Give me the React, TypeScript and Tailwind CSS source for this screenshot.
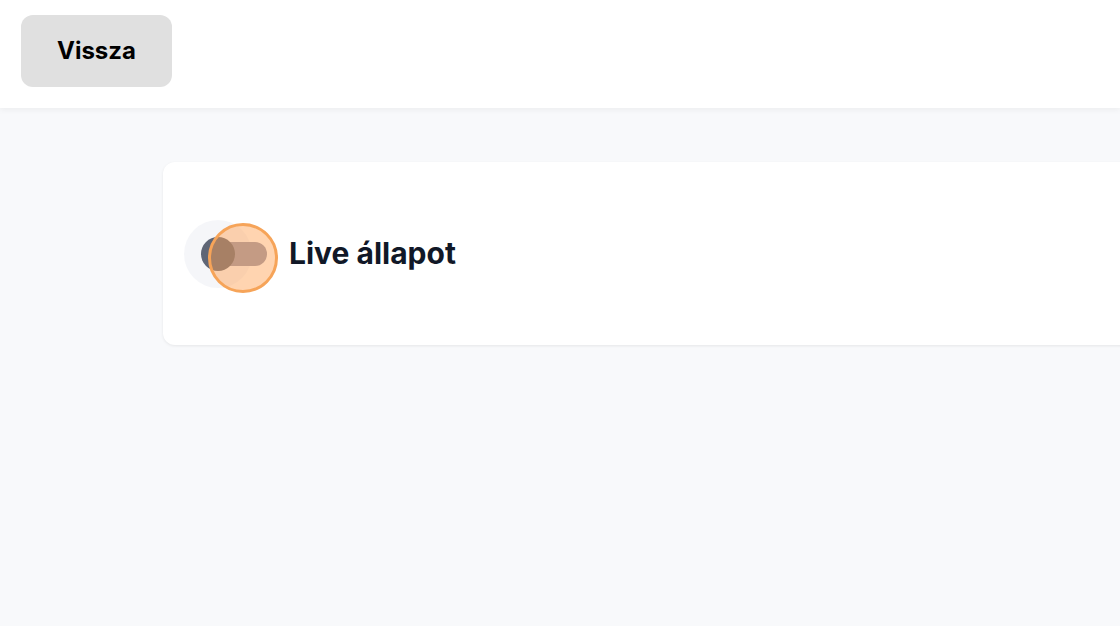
import React from "react";

// Interruptor "Live" com o halo de hover e o indicador de clique por cima
function LiveSwitch() {
  return (
    <div className="relative w-[96px] h-[68px] shrink-0 flex items-center">
      <div className="w-[68px] h-[68px] rounded-full bg-[#f3f4f7]/80 flex items-center justify-center">
        <div className="relative z-10 w-[34px] h-[34px] rounded-full bg-[#5f6676]" />
      </div>
      {/* trilho: acima do halo, abaixo do polegar */}
      <div className="absolute left-[18px] top-[22px] w-[65px] h-[24px] rounded-full bg-[#9496ae]" />
      {/* indicador de clique */}
      <div className="absolute z-20 left-[24px] top-[3px] w-[70px] h-[70px] rounded-full border-[3px] border-[#f6a459] bg-[#ffa050]/45" />
    </div>
  );
}

export default function App() {
  return (
    <div
      className="w-full h-screen overflow-hidden bg-[#f8f9fb]"
      style={{ fontFamily: "Inter, 'Noto Sans', sans-serif" }}
    >
      <header className="h-[108px] bg-white flex items-start pt-[15px] px-[21px] shadow-[0_2px_6px_rgba(0,0,0,0.05)] relative">
        <button className="w-[151px] h-[72px] rounded-xl bg-[#e0e0e0] text-[24px] font-bold text-black">
          Vissza
        </button>
      </header>

      <main className="pt-[54px] pl-[163px]">
        <section className="w-[1000px] h-[183px] bg-white rounded-xl shadow-[0_1px_3px_rgba(0,0,0,0.08)] flex items-center pl-[21px]">
          <LiveSwitch />
          <h2 className="ml-[9px] text-[30px] font-bold text-[#111827]">
            Live állapot
          </h2>
        </section>
      </main>
    </div>
  );
}
